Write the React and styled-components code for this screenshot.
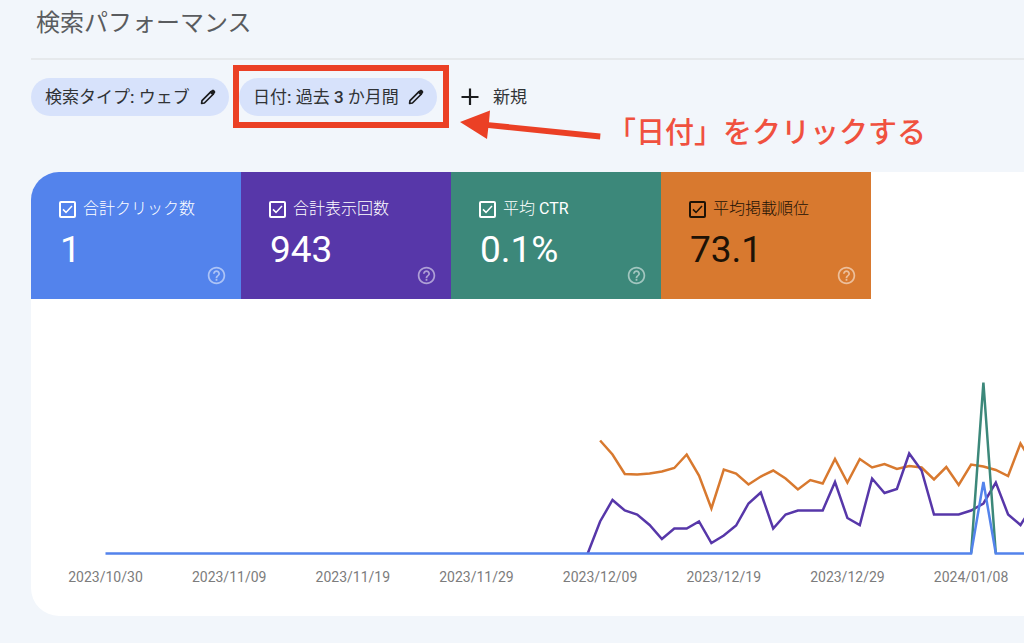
import React from "react";
import styled, { createGlobalStyle } from "styled-components";
import { MdHelpOutline } from "react-icons/md";

const GlobalStyle = createGlobalStyle`
  * { box-sizing: border-box; }
  body {
    margin: 0;
    min-height: 100vh;
    background: #f2f6fb;
    overflow-x: hidden;
    font-family: Roboto, "Noto Sans CJK JP", sans-serif;
    color: #303336;
  }
`;

const Page = styled.main`
  display: flex;
  flex-direction: column;
  padding-left: 31px;
  overflow: hidden;
`;

const Header = styled.header`
  padding: 1px 5px 13px;
  border-bottom: 2px solid #e6e9ec;
`;

const Title = styled.h1`
  margin: 0;
  font-size: 24px;
  line-height: 44px;
  font-weight: 400;
  color: #5a5c5f;
`;

const Filters = styled.div`
  position: relative;
  display: flex;
  align-items: center;
  gap: 10px;
  padding: 18px 0 56px;
`;

const Chip = styled.button`
  display: flex;
  align-items: center;
  justify-content: space-between;
  width: 198px;
  height: 38px;
  padding: 0 13px 0 14px;
  border: 0;
  border-radius: 19px;
  background: #d7e2fb;
  color: #303336;
  font: inherit;
  font-size: 17px;
  line-height: 24px;
  white-space: pre;

  b { font-weight: 500; }
  svg { color: #1c1d1f; }
`;

const Highlight = styled.div`
  position: relative;

  &::after {
    content: "";
    position: absolute;
    inset: -13px -12px -12px -6px;
    border: 6px solid #eb4025;
    pointer-events: none;
  }
`;

const AddButton = styled.button`
  display: flex;
  align-items: center;
  gap: 14px;
  margin-left: 14px;
  padding: 0;
  border: 0;
  background: none;
  color: #303336;
  font: inherit;
  font-size: 17px;
  line-height: 24px;
`;

const Callout = styled.div`
  position: absolute;
  left: 429px;
  top: 50px;
  display: flex;
  align-items: flex-start;
  gap: 5px;
  color: #f0513f;
  font-size: 29px;
  line-height: 46px;
  font-weight: 500;
  white-space: nowrap;
`;

const Panel = styled.section`
  background: #fff;
  border-radius: 28px 0 0 28px;
  overflow: hidden;
`;

const Tiles = styled.div`
  display: flex;
`;

const Tile = styled.div`
  display: flex;
  flex-direction: column;
  flex: 0 0 210px;
  height: 127px;
  padding: 24px 14px 0 28px;
  background: ${(p) => p.$bg};
  color: ${(p) => p.$fg};
`;

const TileLabel = styled.label`
  display: flex;
  align-items: center;
  gap: 7px;
  font-size: 16px;
  line-height: 26px;
  font-weight: 300;
  white-space: nowrap;

  b { font-weight: 400; }
`;

const CheckWrap = styled.span`
  display: grid;
  width: 17px;
  height: 17px;

  > * { grid-area: 1 / 1; }
  svg { pointer-events: none; visibility: hidden; }
  input:checked + svg { visibility: visible; }
`;

const CheckInput = styled.input`
  appearance: none;
  width: 17px;
  height: 17px;
  margin: 0;
  border: 2px solid currentColor;
  border-radius: 2px;
  color: inherit;
`;

const TileValue = styled.div`
  font-size: 37px;
  line-height: 44px;
  margin-top: 6px;
  padding-left: 1px;
`;

const HelpButton = styled.button`
  display: flex;
  align-self: flex-end;
  margin-top: -7px;
  padding: 0;
  border: 0;
  background: none;
  color: rgba(255, 255, 255, 0.52);
`;

const Chart = styled.svg`
  display: block;
  font-family: Roboto, sans-serif;
  font-size: 14px;
`;

const metrics = [
  { id: "clicks", label: "合計クリック数", value: "1", bg: "#5383ec", fg: "#fff" },
  { id: "impressions", label: "合計表示回数", value: "943", bg: "#5737a9", fg: "#fff" },
  { id: "ctr", label: "平均", unit: "CTR", value: "0.1%", bg: "#3c887a", fg: "#fff" },
  { id: "position", label: "平均掲載順位", value: "73.1", bg: "#d8792f", fg: "#1d1206" },
];

const dates = [
  "2023/10/30", "2023/11/09", "2023/11/19", "2023/11/29",
  "2023/12/09", "2023/12/19", "2023/12/29", "2024/01/08",
];

// Chart geometry: one step per day, heights measured up from the baseline.
const START = 74.5;
const STEP = 12.365;
const BASE = 254.5;

const position = [
  113, 99, 79.5, 79, 80, 82, 85.5, 99, 78, 45, 84, 80, 69, 77, 83, 75, 64, 73.5, 70,
  94.5, 71, 94.5, 86, 89.5, 84.5, 87.5, 86, 74, 86.5, 68.5, 89, 87, 83.5, 77.5, 110, 90,
];
const impressions = [
  0, 32, 53.5, 43, 39, 28.5, 14.5, 25, 25, 32, 10.5, 18, 28, 50, 61, 25, 39, 43, 43, 43,
  71.5, 35.5, 28.5, 75, 60.5, 64.5, 100, 83, 39, 39, 39, 43, 50, 71, 39, 28.5, 48,
];

const points = (values, first) =>
  values.map((v, i) => `${(START + (first + i) * STEP).toFixed(1)},${BASE - v}`).join(" ");

const flat = Array(71).fill(0);
const series = [
  { color: "#d8792f", d: points(position, 40) },
  { color: "#5737a9", d: points(impressions, 39) },
  { color: "#3c887a", d: points([0, 171, 0], 70) },
  { color: "#5383ec", d: points([...flat, 71.5, 0, 0, 0, 0], 0) },
];

function Pencil() {
  return (
    <svg width="16" height="16" viewBox="0 0 16 16" fill="none" stroke="currentColor" strokeLinejoin="round">
      <path d="M1.6 14.4 L2 11.6 L11 2.6 L13.4 5 L4.4 14 Z" strokeWidth="1.7" />
      <path d="M10.3 3.3 L12.4 1.4 Q13 1 13.6 1.5 L14.5 2.4 Q15 3 14.5 3.6 L12.7 5.7 Z" fill="currentColor" strokeWidth="1.2" />
    </svg>
  );
}

function Metric({ id, label, unit, value, bg, fg }) {
  return (
    <Tile $bg={bg} $fg={fg}>
      <TileLabel htmlFor={id}>
        <CheckWrap>
          <CheckInput id={id} type="checkbox" defaultChecked />
          <svg width="17" height="17" viewBox="0 0 17 17" fill="none" stroke="currentColor" strokeWidth="1.5">
            <path d="M4 8.4 L7 11.4 L13 4.9" />
          </svg>
        </CheckWrap>
        <span>
          {label}
          {unit && <b> {unit}</b>}
        </span>
      </TileLabel>
      <TileValue>{value}</TileValue>
      <HelpButton type="button" aria-label={label}>
        <MdHelpOutline size={21} />
      </HelpButton>
    </Tile>
  );
}

export default function App() {
  return (
    <>
      <GlobalStyle />
      <Page>
        <Header>
          <Title>検索パフォーマンス</Title>
        </Header>
        <Filters>
          <Chip type="button">
            <span>検索タイプ<b>:</b> ウェブ</span>
            <Pencil />
          </Chip>
          <Highlight>
            <Chip type="button">
              <span>日付<b>:</b> 過去 <b>3</b> か月間</span>
              <Pencil />
            </Chip>
          </Highlight>
          <AddButton type="button">
            <svg width="18" height="18" viewBox="0 0 18 18" stroke="#1c1d1f" strokeWidth="2.2">
              <path d="M9 0.5 V17 M0.5 9 H17.5" />
            </svg>
            新規
          </AddButton>
          <Callout>
            <svg width="142" height="32" viewBox="0 0 142 32">
              <path d="M0 12 L30 0.5 L29 12.2 L140.5 23.5 L140 29.5 L28.3 18 L27 29 Z" fill="#eb4025" />
            </svg>
            <span>「日付」をクリックする</span>
          </Callout>
        </Filters>
        <Panel>
          <Tiles>
            {metrics.map((m) => (
              <Metric key={m.id} {...m} />
            ))}
          </Tiles>
          <Chart width="1024" height="317" viewBox="0 0 1024 317">
            {series.map((s) => (
              <polyline key={s.color} points={s.d} fill="none" stroke={s.color} strokeWidth="2.5" />
            ))}
            {dates.map((d, i) => (
              <text key={d} x={START + i * 10 * STEP} y="283" textAnchor="middle" fill="#7c7c7c">
                {d}
              </text>
            ))}
          </Chart>
        </Panel>
      </Page>
    </>
  );
}
